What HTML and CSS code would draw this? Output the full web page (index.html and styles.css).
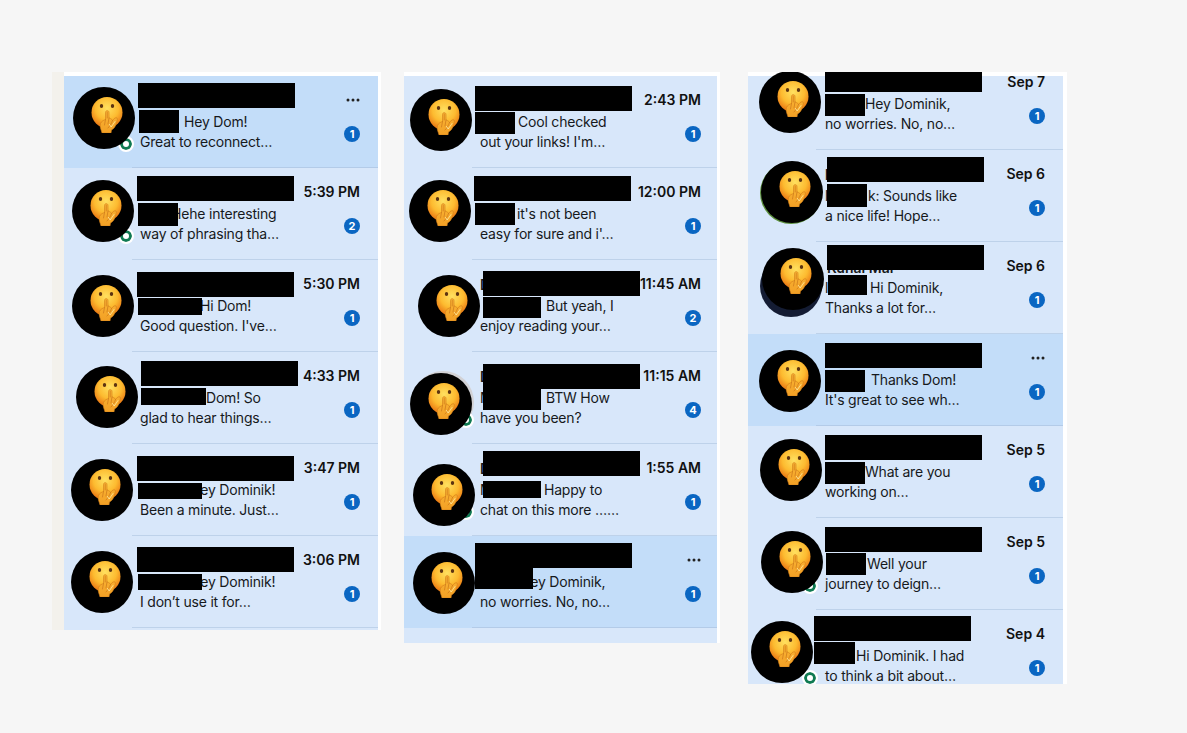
FILE: index.html
```html
<!DOCTYPE html>
<html lang="en">
<head>
  <meta charset="UTF-8">
  <meta name="viewport" content="width=device-width, initial-scale=1">
  <title>Messages</title>
  <link rel="stylesheet" href="styles.css">
</head>
<body>
  <!-- Shared sticker drawing -->
  <svg class="defs" width="0" height="0" aria-hidden="true">
    <defs>
      <radialGradient id="face" cx="50%" cy="36%" r="60%">
        <stop offset="0" stop-color="#ffe060"/>
        <stop offset="0.62" stop-color="#fdbb30"/>
        <stop offset="1" stop-color="#ec7f16"/>
      </radialGradient>
      <linearGradient id="hand" x1="0" y1="0" x2="0" y2="1">
        <stop offset="0" stop-color="#fbb535"/>
        <stop offset="1" stop-color="#f2a025"/>
      </linearGradient>
      <symbol id="shush" viewBox="0 0 32 36">
        <circle cx="16" cy="15.500" r="15.500" fill="url(#face)"/>
        <ellipse cx="10.500" cy="9" rx="1.700" ry="1.900" fill="#5e3411"/>
        <ellipse cx="21.500" cy="9" rx="1.700" ry="1.900" fill="#5e3411"/>
        <path d="M11 36 C10 32 8.500 30 9.500 26.500 C10.500 24 13 23 14.500 22.500 L14.500 15.500 C14.500 13 18 13 18 15.500 L18 21 C20 21.500 21 22.500 21.500 23.500 C23 21.500 25 20 26 21 C27 22 25.800 24.500 25.200 26.500 C24.500 30 22.500 32 20.500 33 L20 36 Z" fill="url(#hand)" stroke="#d17c18" stroke-width="0.600"/>
        <path d="M16.200 15 L16.200 21 M14.500 22.500 L13.500 28 M18 21 L17 27 M21.500 23.500 C20.500 26.500 19 29 17 31" fill="none" stroke="#c9761a" stroke-width="0.700" stroke-linecap="round"/>
        <path d="M18.500 27.500 L20.200 30 L24 24.500" fill="none" stroke="#ffe59a" stroke-width="0.900" stroke-linecap="round"/>
      </symbol>
      <symbol id="more" viewBox="0 0 14 4">
        <circle cx="2" cy="2" r="1.500"/>
        <circle cx="7" cy="2" r="1.500"/>
        <circle cx="12" cy="2" r="1.500"/>
      </symbol>
    </defs>
  </svg>

  <main class="board">

    <!-- Left list -->
    <section class="frame frame-left">
      <div class="row a1 active">
        <div class="avatar"><span class="presence"></span></div>
        <div class="content">
          <div class="summary"><div class="name"></div><p class="first">Hey Dom!</p><p>Great to reconnect…</p></div>
          <div class="meta"><svg class="more"><use href="#more"/></svg><span class="badge">1</span></div>
        </div>
        <i class="mask name-mask"></i><i class="mask from-mask"></i>
        <span class="sticker"><svg><use href="#shush"/></svg></span>
      </div>
      <div class="row a2">
        <div class="avatar"><span class="presence"></span></div>
        <div class="content">
          <div class="summary"><div class="name"></div><p class="first">Hehe interesting</p><p>way of phrasing tha…</p></div>
          <div class="meta"><time>5:39 PM</time><span class="badge">2</span></div>
        </div>
        <i class="mask name-mask"></i><i class="mask from-mask"></i>
        <span class="sticker"><svg><use href="#shush"/></svg></span>
      </div>
      <div class="row a3">
        <div class="avatar"></div>
        <div class="content">
          <div class="summary"><div class="name"></div><p class="first">Hi Dom!</p><p>Good question. I've…</p></div>
          <div class="meta"><time>5:30 PM</time><span class="badge">1</span></div>
        </div>
        <i class="mask name-mask"></i><i class="mask from-mask"></i>
        <span class="sticker"><svg><use href="#shush"/></svg></span>
      </div>
      <div class="row a4">
        <div class="avatar"></div>
        <div class="content">
          <div class="summary"><div class="name"></div><p class="first">Dom! So</p><p>glad to hear things…</p></div>
          <div class="meta"><time>4:33 PM</time><span class="badge">1</span></div>
        </div>
        <i class="mask name-mask"></i><i class="mask from-mask"></i>
        <span class="sticker"><svg><use href="#shush"/></svg></span>
      </div>
      <div class="row a5">
        <div class="avatar"></div>
        <div class="content">
          <div class="summary"><div class="name"></div><p class="first">Hey Dominik!</p><p>Been a minute. Just…</p></div>
          <div class="meta"><time>3:47 PM</time><span class="badge">1</span></div>
        </div>
        <i class="mask name-mask"></i><i class="mask from-mask"></i>
        <span class="sticker"><svg><use href="#shush"/></svg></span>
      </div>
      <div class="row a6">
        <div class="avatar"></div>
        <div class="content">
          <div class="summary"><div class="name"></div><p class="first">Hey Dominik!</p><p>I don’t use it for…</p></div>
          <div class="meta"><time>3:06 PM</time><span class="badge">1</span></div>
        </div>
        <i class="mask name-mask"></i><i class="mask from-mask"></i>
        <span class="sticker"><svg><use href="#shush"/></svg></span>
      </div>
    </section>

    <!-- Middle list -->
    <section class="frame frame-middle">
      <div class="row b1">
        <div class="avatar"></div>
        <div class="content">
          <div class="summary"><div class="name"></div><p class="first">Cool checked</p><p>out your links! I'm…</p></div>
          <div class="meta"><time>2:43 PM</time><span class="badge">1</span></div>
        </div>
        <i class="mask name-mask"></i><i class="mask from-mask"></i>
        <span class="sticker"><svg><use href="#shush"/></svg></span>
      </div>
      <div class="row b2">
        <div class="avatar"></div>
        <div class="content">
          <div class="summary"><div class="name"></div><p class="first">it's not been</p><p>easy for sure and i'…</p></div>
          <div class="meta"><time>12:00 PM</time><span class="badge">1</span></div>
        </div>
        <i class="mask name-mask"></i><i class="mask from-mask"></i>
        <span class="sticker"><svg><use href="#shush"/></svg></span>
      </div>
      <div class="row b3">
        <div class="avatar"></div>
        <div class="content">
          <div class="summary"><div class="name">D</div><p class="first">But yeah, I</p><p>enjoy reading your…</p></div>
          <div class="meta"><time>11:45 AM</time><span class="badge">2</span></div>
        </div>
        <i class="mask name-mask"></i><i class="mask from-mask"></i>
        <span class="sticker"><svg><use href="#shush"/></svg></span>
      </div>
      <div class="row b4">
        <div class="avatar avatar-grey"><span class="presence"></span></div>
        <div class="content">
          <div class="summary"><div class="name">D</div><p class="first has-lead"><span class="lead">M</span>BTW How</p><p>have you been?</p></div>
          <div class="meta"><time>11:15 AM</time><span class="badge">4</span></div>
        </div>
        <i class="mask name-mask"></i><i class="mask from-mask"></i>
        <span class="sticker"><svg><use href="#shush"/></svg></span>
      </div>
      <div class="row b5">
        <div class="avatar"><span class="presence"></span></div>
        <div class="content">
          <div class="summary"><div class="name">D</div><p class="first has-lead"><span class="lead">M</span>Happy to</p><p>chat on this more ……</p></div>
          <div class="meta"><time>1:55 AM</time><span class="badge">1</span></div>
        </div>
        <i class="mask name-mask"></i><i class="mask from-mask"></i>
        <span class="sticker"><svg><use href="#shush"/></svg></span>
      </div>
      <div class="row b6 active">
        <div class="avatar"></div>
        <div class="content">
          <div class="summary"><div class="name"></div><p class="first">Hey Dominik,</p><p>no worries. No, no…</p></div>
          <div class="meta"><svg class="more"><use href="#more"/></svg><span class="badge">1</span></div>
        </div>
        <i class="mask name-mask"></i><i class="mask from-mask"></i>
        <span class="sticker"><svg><use href="#shush"/></svg></span>
      </div>
    </section>

    <!-- Right list, scrolled so the first and last rows are cut off -->
    <section class="frame frame-right">
      <div class="scroller">
        <div class="row c1">
          <div class="avatar"></div>
          <div class="content">
            <div class="summary"><div class="name"></div><p class="first">Hey Dominik,</p><p>no worries. No, no…</p></div>
            <div class="meta"><time>Sep 7</time><span class="badge">1</span></div>
          </div>
          <i class="mask name-mask"></i><i class="mask from-mask"></i>
          <span class="sticker"><svg><use href="#shush"/></svg></span>
        </div>
        <div class="row c2">
          <div class="avatar avatar-green"></div>
          <div class="content">
            <div class="summary"><div class="name">l</div><p class="first has-lead"><span class="lead">l</span>k: Sounds like</p><p>a nice life! Hope…</p></div>
            <div class="meta"><time>Sep 6</time><span class="badge">1</span></div>
          </div>
          <i class="mask name-mask"></i><i class="mask from-mask"></i>
          <span class="sticker"><svg><use href="#shush"/></svg></span>
        </div>
        <div class="row c3">
          <div class="avatar avatar-navy"></div>
          <div class="content">
            <div class="summary"><div class="name name-peek">Kunal Mar</div><p class="first has-lead"><span class="lead">l</span>Hi Dominik,</p><p>Thanks a lot for…</p></div>
            <div class="meta"><time>Sep 6</time><span class="badge">1</span></div>
          </div>
          <i class="mask name-mask"></i><i class="mask from-mask"></i>
          <span class="sticker"><svg><use href="#shush"/></svg></span>
        </div>
        <div class="row c4 active">
          <div class="avatar"></div>
          <div class="content">
            <div class="summary"><div class="name"></div><p class="first">Thanks Dom!</p><p>It's great to see wh…</p></div>
            <div class="meta"><svg class="more"><use href="#more"/></svg><span class="badge">1</span></div>
          </div>
          <i class="mask name-mask"></i><i class="mask from-mask"></i>
          <span class="sticker"><svg><use href="#shush"/></svg></span>
        </div>
        <div class="row c5">
          <div class="avatar"></div>
          <div class="content">
            <div class="summary"><div class="name"></div><p class="first">What are you</p><p>working on…</p></div>
            <div class="meta"><time>Sep 5</time><span class="badge">1</span></div>
          </div>
          <i class="mask name-mask"></i><i class="mask from-mask"></i>
          <span class="sticker"><svg><use href="#shush"/></svg></span>
        </div>
        <div class="row c6">
          <div class="avatar"><span class="presence"></span></div>
          <div class="content">
            <div class="summary"><div class="name"></div><p class="first">Well your</p><p>journey to deign…</p></div>
            <div class="meta"><time>Sep 5</time><span class="badge">1</span></div>
          </div>
          <i class="mask name-mask"></i><i class="mask from-mask"></i>
          <span class="sticker"><svg><use href="#shush"/></svg></span>
        </div>
        <div class="row c7">
          <div class="avatar"><span class="presence"></span></div>
          <div class="content">
            <div class="summary"><div class="name"></div><p class="first">Hi Dominik. I had</p><p>to think a bit about…</p></div>
            <div class="meta"><time>Sep 4</time><span class="badge">1</span></div>
          </div>
          <i class="mask name-mask"></i><i class="mask from-mask"></i>
          <span class="sticker"><svg><use href="#shush"/></svg></span>
        </div>
      </div>
    </section>

  </main>
</body>
</html>
```

FILE: styles.css
```css
/* General Styles */
* {
  margin: 0;
  padding: 0;
  box-sizing: border-box;
}

body {
  background-color: #f6f6f6;
  color: #16191c;
  font-family: 'Inter', 'Liberation Sans', sans-serif;
  font-size: 14px;
}

.defs {
  position: absolute;
}

/* Board of three pasted lists */
.board {
  display: flex;
  align-items: flex-start;
  padding-top: 72px;
}

.frame {
  position: relative;
  overflow: hidden;
  padding-top: 4px;
  background: #d8e7fa;
  border-right: 3px solid #fff;
}

/* White strip along the top edge of each list */
.frame::before {
  content: "";
  position: absolute;
  top: 0;
  left: 0;
  right: 0;
  height: 4px;
  background: #fff;
  z-index: 1;
}

.frame-left {
  width: 329px;
  height: 558px;
  margin-left: 52px;
  border-left: 12px solid #f3f1ec;
}

.frame-middle {
  width: 316px;
  height: 571px;
  margin-left: 23px;
}

.frame-right {
  width: 319px;
  height: 612px;
  margin-left: 28px;
  padding-top: 0;
  border-right-width: 4px;
}

.scroller {
  margin-top: -14px;
}

/* Conversation row */
.row {
  position: relative;
  display: flex;
  height: 92px;
  background: #d8e7fa;
}

.row.active {
  background: #c3ddf9;
}

.avatar {
  position: relative;
  flex: none;
  width: 68px;
}

.avatar-grey::before,
.avatar-green::before,
.avatar-navy::before {
  content: "";
  position: absolute;
  left: var(--bx);
  top: var(--by);
  width: 62px;
  height: 62px;
  border-radius: 50%;
}

.avatar-grey::before { background: #d2d2d5; }
.avatar-green::before { background: #5b8f3c; }
.avatar-navy::before { background: #141c33; }

.presence {
  position: absolute;
  left: 54px;
  top: 60px;
  width: 16px;
  height: 16px;
  border: 2px solid #fff;
  border-radius: 50%;
  background: #fff;
  box-shadow: inset 0 0 0 3px #0f7a52;
}

.content {
  flex: 1;
  display: flex;
  justify-content: space-between;
  padding: 14px 18px 0 8px;
  border-bottom: 1px solid #bed2ea;
}

.frame-middle .content {
  padding-right: 16px;
}

.frame-right .content {
  padding-left: 9px;
}

.row.active .content {
  border-bottom-color: #b3cbe8;
}

.name {
  height: 22px;
  font-weight: 600;
  line-height: 22px;
  white-space: nowrap;
}

.name-peek {
  padding: 1px 0 0 2px;
}

.summary p {
  letter-spacing: -0.2px;
  line-height: 20px;
  white-space: nowrap;
}

.summary .first {
  text-indent: var(--ti);
}

.summary .has-lead {
  text-indent: 0;
}

.lead {
  display: inline-block;
  width: var(--ti);
}

.meta {
  display: flex;
  flex-direction: column;
  align-items: flex-end;
}

.meta time {
  height: 20px;
  line-height: 20px;
  color: #111;
  font-weight: 600;
  white-space: nowrap;
}

.badge {
  width: 16px;
  height: 16px;
  margin-top: 16px;
  border-radius: 50%;
  background: #0a66c2;
  color: #fff;
  font-size: 11px;
  font-weight: 700;
  line-height: 16px;
  text-align: center;
}

.more {
  width: 14px;
  height: 4px;
  margin: 8px 0;
  fill: #222;
}

/* Stickers and black boxes pasted over each row */
.sticker {
  position: absolute;
  left: var(--sx);
  top: var(--sy);
  z-index: 2;
  display: flex;
  width: 62px;
  height: 62px;
  padding: 10px 0 0 18px;
  border-radius: 50%;
  background: #000;
}

.sticker svg {
  width: 32px;
  height: 36px;
}

.mask {
  position: absolute;
  z-index: 2;
  background: #000;
}

.name-mask {
  left: var(--nx);
  top: var(--ny);
  width: 157px;
  height: 25px;
}

.from-mask {
  left: var(--fx);
  top: var(--fy);
  width: var(--fw);
  height: var(--fh);
}

/* Where the pasted bits land in each row */
.a1 { --sx: 9px; --sy: 11px; --nx: 74px; --ny: 7px; --fx: 75px; --fy: 34px; --fw: 40px; --fh: 23px; --ti: 44px; }
.a2 { --sx: 8px; --sy: 12px; --nx: 73px; --ny: 8px; --fx: 74px; --fy: 35px; --fw: 40px; --fh: 23px; --ti: 31px; }
.a3 { --sx: 8px; --sy: 15px; --nx: 73px; --ny: 12px; --fx: 74px; --fy: 38px; --fw: 64px; --fh: 17px; --ti: 60px; }
.a4 { --sx: 12px; --sy: 14px; --nx: 77px; --ny: 9px; --fx: 77px; --fy: 36px; --fw: 65px; --fh: 17px; --ti: 66px; }
.a5 { --sx: 7px; --sy: 15px; --nx: 73px; --ny: 12px; --fx: 74px; --fy: 39px; --fw: 64px; --fh: 16px; --ti: 50px; }
.a6 { --sx: 7px; --sy: 15px; --nx: 73px; --ny: 11px; --fx: 74px; --fy: 38px; --fw: 64px; --fh: 16px; --ti: 50px; }

.b1 { --sx: 6px; --sy: 13px; --nx: 71px; --ny: 10px; --fx: 71px; --fy: 36px; --fw: 40px; --fh: 22px; --ti: 38px; }
.b2 { --sx: 5px; --sy: 12px; --nx: 70px; --ny: 8px; --fx: 71px; --fy: 35px; --fw: 40px; --fh: 22px; --ti: 37px; }
.b3 { --sx: 14px; --sy: 15px; --nx: 79px; --ny: 11px; --fx: 79px; --fy: 37px; --fw: 58px; --fh: 21px; --ti: 66px; }
.b4 { --sx: 6px; --sy: 21px; --nx: 79px; --ny: 12px; --fx: 79px; --fy: 37px; --fw: 58px; --fh: 21px; --ti: 66px; --bx: 8px; --by: 19px; }
.b5 { --sx: 9px; --sy: 20px; --nx: 79px; --ny: 7px; --fx: 79px; --fy: 37px; --fw: 58px; --fh: 17px; --ti: 64px; }
.b6 { --sx: 9px; --sy: 16px; --nx: 71px; --ny: 7px; --fx: 71px; --fy: 32px; --fw: 58px; --fh: 21px; --ti: 40px; }

.c1 { --sx: 11px; --sy: 13px; --nx: 77px; --ny: 9px; --fx: 77px; --fy: 36px; --fw: 40px; --fh: 22px; --ti: 40px; }
.c2 { --sx: 13px; --sy: 11px; --nx: 79px; --ny: 7px; --fx: 79px; --fy: 34px; --fw: 40px; --fh: 23px; --ti: 43px; --bx: 12px; --by: 12px; }
.c3 { --sx: 14px; --sy: 6px; --nx: 79px; --ny: 3px; --fx: 80px; --fy: 33px; --fw: 39px; --fh: 20px; --ti: 45px; --bx: 12px; --by: 13px; }
.c4 { --sx: 11px; --sy: 16px; --nx: 77px; --ny: 9px; --fx: 77px; --fy: 36px; --fw: 40px; --fh: 22px; --ti: 46px; }
.c5 { --sx: 12px; --sy: 13px; --nx: 77px; --ny: 9px; --fx: 77px; --fy: 36px; --fw: 40px; --fh: 22px; --ti: 40px; }
.c6 { --sx: 13px; --sy: 13px; --nx: 77px; --ny: 9px; --fx: 78px; --fy: 35px; --fw: 40px; --fh: 22px; --ti: 42px; }
.c7 { --sx: 3px; --sy: 11px; --nx: 66px; --ny: 6px; --fx: 66px; --fy: 32px; --fw: 41px; --fh: 22px; --ti: 31px; }
```
